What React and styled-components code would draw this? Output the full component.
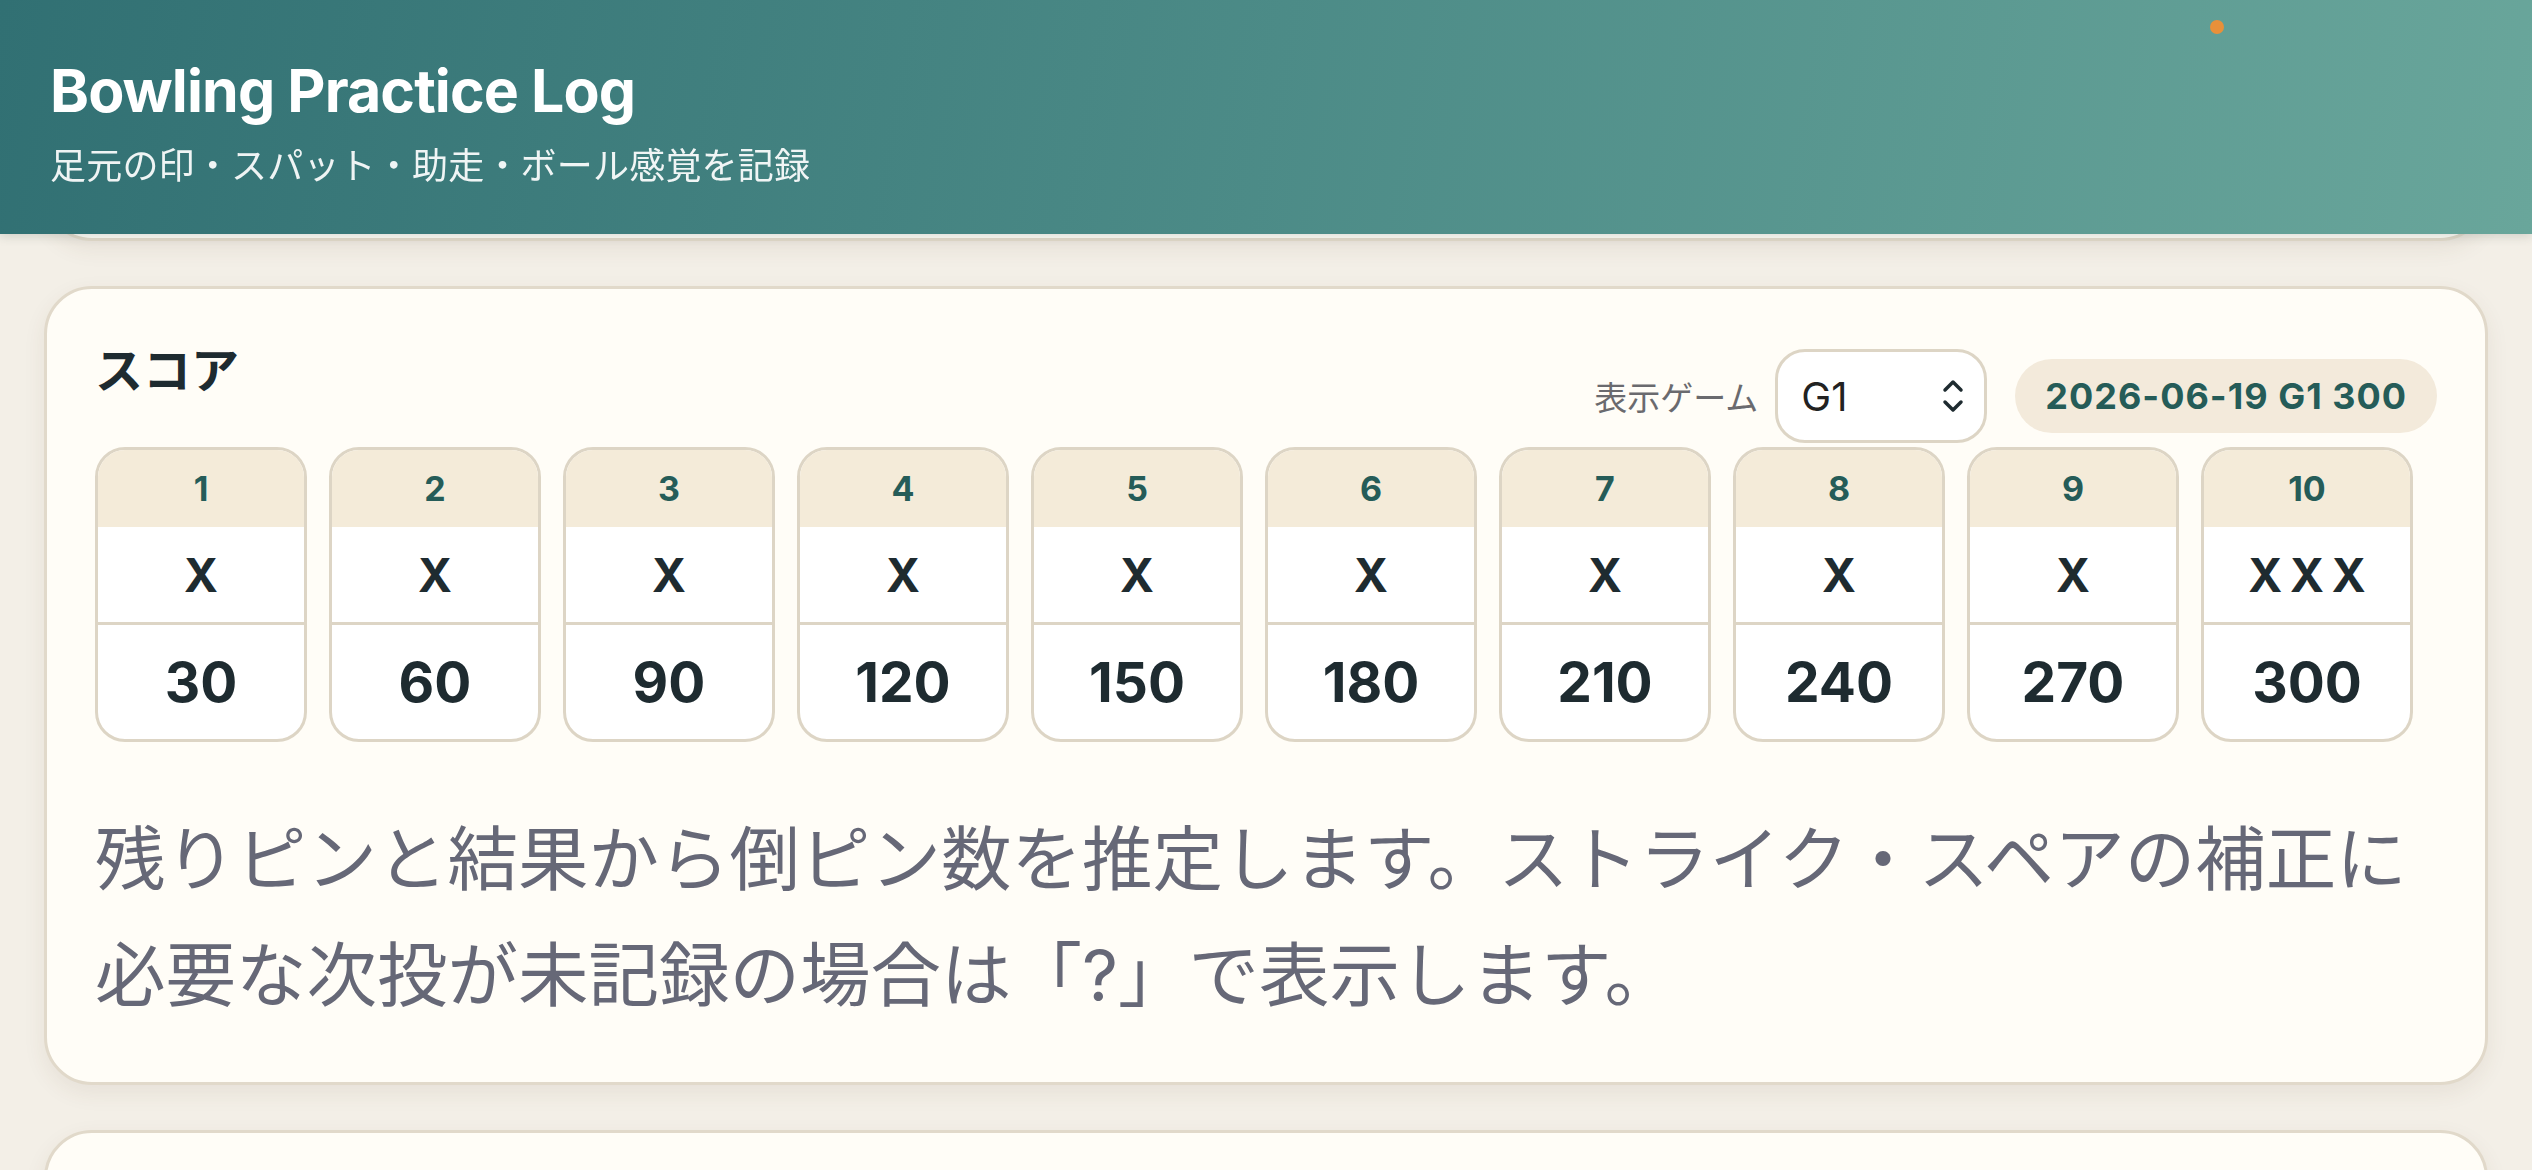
import React, { useState } from 'react';
import styled, { createGlobalStyle } from 'styled-components';

const GlobalStyle = createGlobalStyle`
  html, body {
    margin: 0;
    padding: 0;
    background: #f3efe7;
    font-family: "Inter", "Noto Sans CJK JP", sans-serif;
  }
  * { box-sizing: border-box; }
`;

const frames = [
  { no: 1, mark: 'X', total: 30 },
  { no: 2, mark: 'X', total: 60 },
  { no: 3, mark: 'X', total: 90 },
  { no: 4, mark: 'X', total: 120 },
  { no: 5, mark: 'X', total: 150 },
  { no: 6, mark: 'X', total: 180 },
  { no: 7, mark: 'X', total: 210 },
  { no: 8, mark: 'X', total: 240 },
  { no: 9, mark: 'X', total: 270 },
  { no: 10, mark: 'X X X', total: 300 },
];

const App = () => {
  const [game, setGame] = useState('G1');

  return (
    <Page>
      <GlobalStyle />
      <Header>
        <Title>Bowling Practice Log</Title>
        <Subtitle>足元の印・スパット・助走・ボール感覚を記録</Subtitle>
        <StatusDot />
      </Header>

      <Main>
        <Card height="241px" />

        <Card>
          <CardHead>
            <Heading>スコア</Heading>
            <Controls>
              <Label htmlFor="game">表示ゲーム</Label>
              <SelectWrap>
                <Select id="game" value={game} onChange={(e) => setGame(e.target.value)}>
                  <option>G1</option>
                  <option>G2</option>
                  <option>G3</option>
                </Select>
                <Chevrons viewBox="0 0 24 34" fill="none" stroke="#1e2b30" strokeWidth="3.5" strokeLinecap="round" strokeLinejoin="round">
                  <path d="M4 11 L12 3 L20 11" />
                  <path d="M4 23 L12 31 L20 23" />
                </Chevrons>
              </SelectWrap>
              <Pill>2026-06-19 {game} 300</Pill>
            </Controls>
          </CardHead>

          <Frames>
            {frames.map((f) => (
              <Frame key={f.no}>
                <FrameNo>{f.no}</FrameNo>
                <Mark>{f.mark}</Mark>
                <Total>{f.total}</Total>
              </Frame>
            ))}
          </Frames>

          <Note>
            残りピンと結果から倒ピン数を推定します。ストライク・スペアの補正に必要な次投が未記録の場合は「?」で表示します。
          </Note>
        </Card>

        <Card height="400px" />
      </Main>
    </Page>
  );
};

const Page = styled.div`
  height: 100vh;
  overflow: hidden;
  background: #f3efe7;
`;

const Header = styled.header`
  position: fixed;
  top: 0;
  left: 0;
  right: 0;
  z-index: 10;
  height: 234px;
  padding: 55px 50px 0;
  background: linear-gradient(100deg, #317073 0%, #4c8b87 50%, #69a69b 100%);
  box-shadow: 0 2px 10px rgba(40, 60, 55, 0.18);
  color: #fff;
`;

const Title = styled.h1`
  margin: 0;
  font-size: 59px;
  line-height: 72px;
  font-weight: 700;
  letter-spacing: -0.9px;
`;

const Subtitle = styled.p`
  margin: 14px 0 0;
  font-size: 36px;
  line-height: 50px;
  letter-spacing: 0.2px;
  color: rgba(255, 255, 255, 0.92);
`;

const StatusDot = styled.span`
  position: absolute;
  top: 20px;
  right: 308px;
  width: 14px;
  height: 14px;
  border-radius: 50%;
  background: #e8903a;
`;

const Main = styled.main`
  display: flex;
  flex-direction: column;
  gap: 45px;
  padding: 0 44px;
`;

const Card = styled.section`
  flex-shrink: 0;
  height: ${({ height }) => height || 'auto'};
  padding: 52px 48px 48px;
  background: #fffdf7;
  border: 3px solid #e1d9ca;
  border-radius: 48px;
  box-shadow: 0 8px 22px rgba(90, 70, 40, 0.08);
`;

const CardHead = styled.div`
  display: flex;
  justify-content: space-between;
  align-items: flex-start;
`;

const Heading = styled.h2`
  margin: 0;
  font-size: 48px;
  line-height: 60px;
  font-weight: 700;
  color: #1e2b30;
`;

const Controls = styled.div`
  display: flex;
  align-items: center;
  margin-top: 8px;
`;

const Label = styled.label`
  font-size: 33px;
  color: #6a6a6e;
  margin-right: 17px;
`;

const SelectWrap = styled.div`
  position: relative;
  margin-right: 28px;
`;

const Select = styled.select`
  appearance: none;
  width: 212px;
  height: 94px;
  padding: 0 0 0 23px;
  border: 3px solid #ddd5c5;
  border-radius: 30px;
  background: #fff;
  font-family: "Inter", "Noto Sans CJK JP", sans-serif;
  font-size: 40px;
  color: #222;
  outline: none;
`;

const Chevrons = styled.svg`
  position: absolute;
  right: 22px;
  top: 30px;
  width: 24px;
  height: 34px;
  pointer-events: none;
`;

const Pill = styled.span`
  display: inline-flex;
  align-items: center;
  height: 74px;
  padding: 0 30px;
  border-radius: 37px;
  background: #f3eadb;
  color: #255c58;
  font-size: 36px;
  font-weight: 700;
  letter-spacing: 1px;
`;

const Frames = styled.div`
  display: flex;
  gap: 22px;
  margin-top: 4px;
`;

const Frame = styled.div`
  width: 212px;
  flex-shrink: 0;
  display: flex;
  flex-direction: column;
  border: 3px solid #ddd5c5;
  border-radius: 30px;
  overflow: hidden;
  background: #fff;
  text-align: center;
`;

const FrameNo = styled.div`
  height: 77px;
  display: flex;
  align-items: center;
  justify-content: center;
  background: #f4ebd9;
  color: #255c58;
  font-size: 34px;
  font-weight: 700;
`;

const Mark = styled.div`
  height: 98px;
  display: flex;
  align-items: center;
  justify-content: center;
  border-bottom: 3px solid #ddd5c5;
  color: #1e2b30;
  font-size: 46px;
  font-weight: 700;
  word-spacing: -3px;
`;

const Total = styled.div`
  height: 114px;
  display: flex;
  align-items: center;
  justify-content: center;
  color: #1e2b30;
  font-size: 55px;
  font-weight: 700;
`;

const Note = styled.p`
  margin: 60px 0 0;
  font-size: 70.5px;
  line-height: 116px;
  color: #666877;
`;

export default App;
